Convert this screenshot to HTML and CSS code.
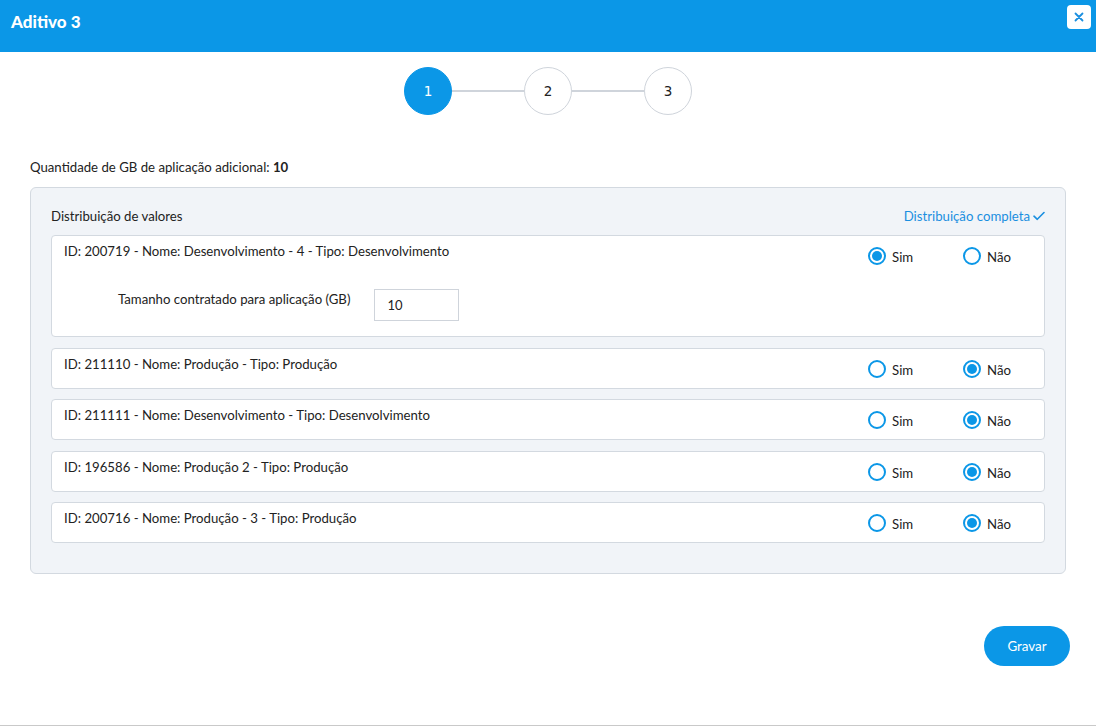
FILE: index.html
```html
<!DOCTYPE html>
<html lang="pt-BR">
<head>
  <meta charset="UTF-8" />
  <title>Aditivo 3</title>
  <link rel="stylesheet" href="styles.css">
</head>
<body>
  <div class="modal">
    <div class="modal-header">
      <h1 class="modal-title">Aditivo 3</h1>
      <button class="close-btn" aria-label="Fechar">
        <svg width="10" height="10" viewBox="0 0 10 10"><path d="M1.5 1.5 L8.5 8.5 M8.5 1.5 L1.5 8.5" stroke="#1a8fe0" stroke-width="1.8" stroke-linecap="round"/></svg>
      </button>
    </div>

    <div class="modal-body">
      <div class="stepper">
        <div class="step active">1</div>
        <div class="step-line"></div>
        <div class="step">2</div>
        <div class="step-line"></div>
        <div class="step">3</div>
      </div>

      <p class="amount">Quantidade de GB de aplicação adicional: <b>10</b></p>

      <div class="panel">
        <div class="panel-head">
          <span>Distribuição de valores</span>
          <span class="done">Distribuição completa
            <svg width="12" height="10" viewBox="0 0 12 10"><path d="M1 5.2 L4.3 8.3 L11 1.5" fill="none" stroke="#1a8fe0" stroke-width="1.6" stroke-linecap="round" stroke-linejoin="round"/></svg>
          </span>
        </div>

        <div class="env-row">
          <div class="env-top">
            <div class="env-name">ID: 200719 - Nome: Desenvolvimento - 4 - Tipo: Desenvolvimento</div>
            <div class="choice">
              <label class="opt"><span class="radio checked"></span>Sim</label>
              <label class="opt"><span class="radio"></span>Não</label>
            </div>
          </div>
          <div class="env-field">
            <span class="field-label">Tamanho contratado para aplicação (GB)</span>
            <input class="field-input" type="text" value="10" />
          </div>
        </div>

        <div class="env-row">
          <div class="env-top">
            <div class="env-name">ID: 211110 - Nome: Produção - Tipo: Produção</div>
            <div class="choice">
              <label class="opt"><span class="radio"></span>Sim</label>
              <label class="opt"><span class="radio checked"></span>Não</label>
            </div>
          </div>
        </div>

        <div class="env-row">
          <div class="env-top">
            <div class="env-name">ID: 211111 - Nome: Desenvolvimento - Tipo: Desenvolvimento</div>
            <div class="choice">
              <label class="opt"><span class="radio"></span>Sim</label>
              <label class="opt"><span class="radio checked"></span>Não</label>
            </div>
          </div>
        </div>

        <div class="env-row">
          <div class="env-top">
            <div class="env-name">ID: 196586 - Nome: Produção 2 - Tipo: Produção</div>
            <div class="choice">
              <label class="opt"><span class="radio"></span>Sim</label>
              <label class="opt"><span class="radio checked"></span>Não</label>
            </div>
          </div>
        </div>

        <div class="env-row">
          <div class="env-top">
            <div class="env-name">ID: 200716 - Nome: Produção - 3 - Tipo: Produção</div>
            <div class="choice">
              <label class="opt"><span class="radio"></span>Sim</label>
              <label class="opt"><span class="radio checked"></span>Não</label>
            </div>
          </div>
        </div>
      </div>

      <div class="footer">
        <button class="save-btn">Gravar</button>
      </div>
    </div>
  </div>
</body>
</html>
```

FILE: styles.css
```css
* {
  box-sizing: border-box;
}

body {
  margin: 0;
  background: #fff;
  font-family: 'Lato', 'Open Sans', sans-serif;
  font-size: 13.2px;
  color: #222;
}

.modal {
  width: 1096px;
  height: 726px;
  border-bottom: 1px solid #c9c9c9;
  background: #fff;
}

.modal-header {
  height: 52px;
  background: #0b97e7;
  display: flex;
  justify-content: space-between;
  align-items: flex-start;
  padding: 0 5px 0 11px;
}

.modal-title {
  margin: 11px 0 0;
  font-size: 17px;
  font-weight: 900;
  color: #fff;
}

.close-btn {
  margin-top: 5px;
  width: 24px;
  height: 24px;
  border: none;
  border-radius: 4px;
  background: #fff;
  display: flex;
  align-items: center;
  justify-content: center;
  padding: 0;
}

.modal-body {
  padding: 15px 30px 0;
}

.stepper {
  display: flex;
  justify-content: center;
  align-items: center;
}

.step {
  width: 48px;
  height: 48px;
  border-radius: 50%;
  border: 1px solid #cfd4db;
  background: #fff;
  display: flex;
  align-items: center;
  justify-content: center;
  font-family: 'DejaVu Sans', sans-serif;
  font-size: 13.5px;
  color: #222;
}

.step.active {
  background: #0b97e7;
  border-color: #0b97e7;
  color: #fff;
}

.step-line {
  width: 72px;
  height: 2px;
  background: #cfd4db;
}

.amount {
  margin: 44px 0 12px;
  line-height: 16px;
}

.panel {
  background: #f1f4f8;
  border: 1px solid #d3d9e0;
  border-radius: 6px;
  padding: 20px 20px 30px;
}

.panel-head {
  display: flex;
  justify-content: space-between;
  line-height: 16px;
  margin-bottom: 11px;
}

.done {
  color: #1a8fe0;
  display: flex;
  align-items: center;
  gap: 3px;
}

.env-row {
  background: #fff;
  border: 1px solid #d3d9e0;
  border-radius: 4px;
  padding: 7px 12px 10px;
  margin-bottom: 10.5px;
}

.env-row:last-child {
  margin-bottom: 0;
}

.env-top {
  display: flex;
  justify-content: space-between;
  align-items: flex-start;
}

.env-name {
  line-height: 16px;
}

.choice {
  display: flex;
  margin-top: 4px;
  margin-right: 21px;
}

.opt {
  display: flex;
  align-items: center;
  gap: 6px;
  height: 18px;
  line-height: 18px;
  padding-top: 2px;
}

.opt:first-child {
  width: 95px;
}

.radio {
  width: 18px;
  height: 18px;
  border: 2px solid #0b97e7;
  border-radius: 50%;
  background: #fff;
  position: relative;
  margin-top: -2px;
  flex-shrink: 0;
}

.radio.checked::after {
  content: "";
  position: absolute;
  left: 2px;
  top: 2px;
  width: 10px;
  height: 10px;
  border-radius: 50%;
  background: #0b97e7;
}

.env-field {
  display: flex;
  align-items: flex-start;
  margin: 24px 0 5px 54px;
}

.field-label {
  padding-top: 2px;
  line-height: 16px;
  margin-right: 24px;
}

.field-input {
  width: 85px;
  height: 32px;
  border: 1px solid #cfd4db;
  padding: 0 12px;
  font-family: 'Lato', sans-serif;
  font-size: 13px;
  color: #222;
}

.footer {
  display: flex;
  justify-content: flex-end;
  margin: 52px -4px 0 0;
}

.save-btn {
  width: 86px;
  height: 40px;
  border: none;
  border-radius: 20px;
  background: #0b97e7;
  color: #fff;
  font-family: 'Lato', sans-serif;
  font-size: 13.4px;
}
```
